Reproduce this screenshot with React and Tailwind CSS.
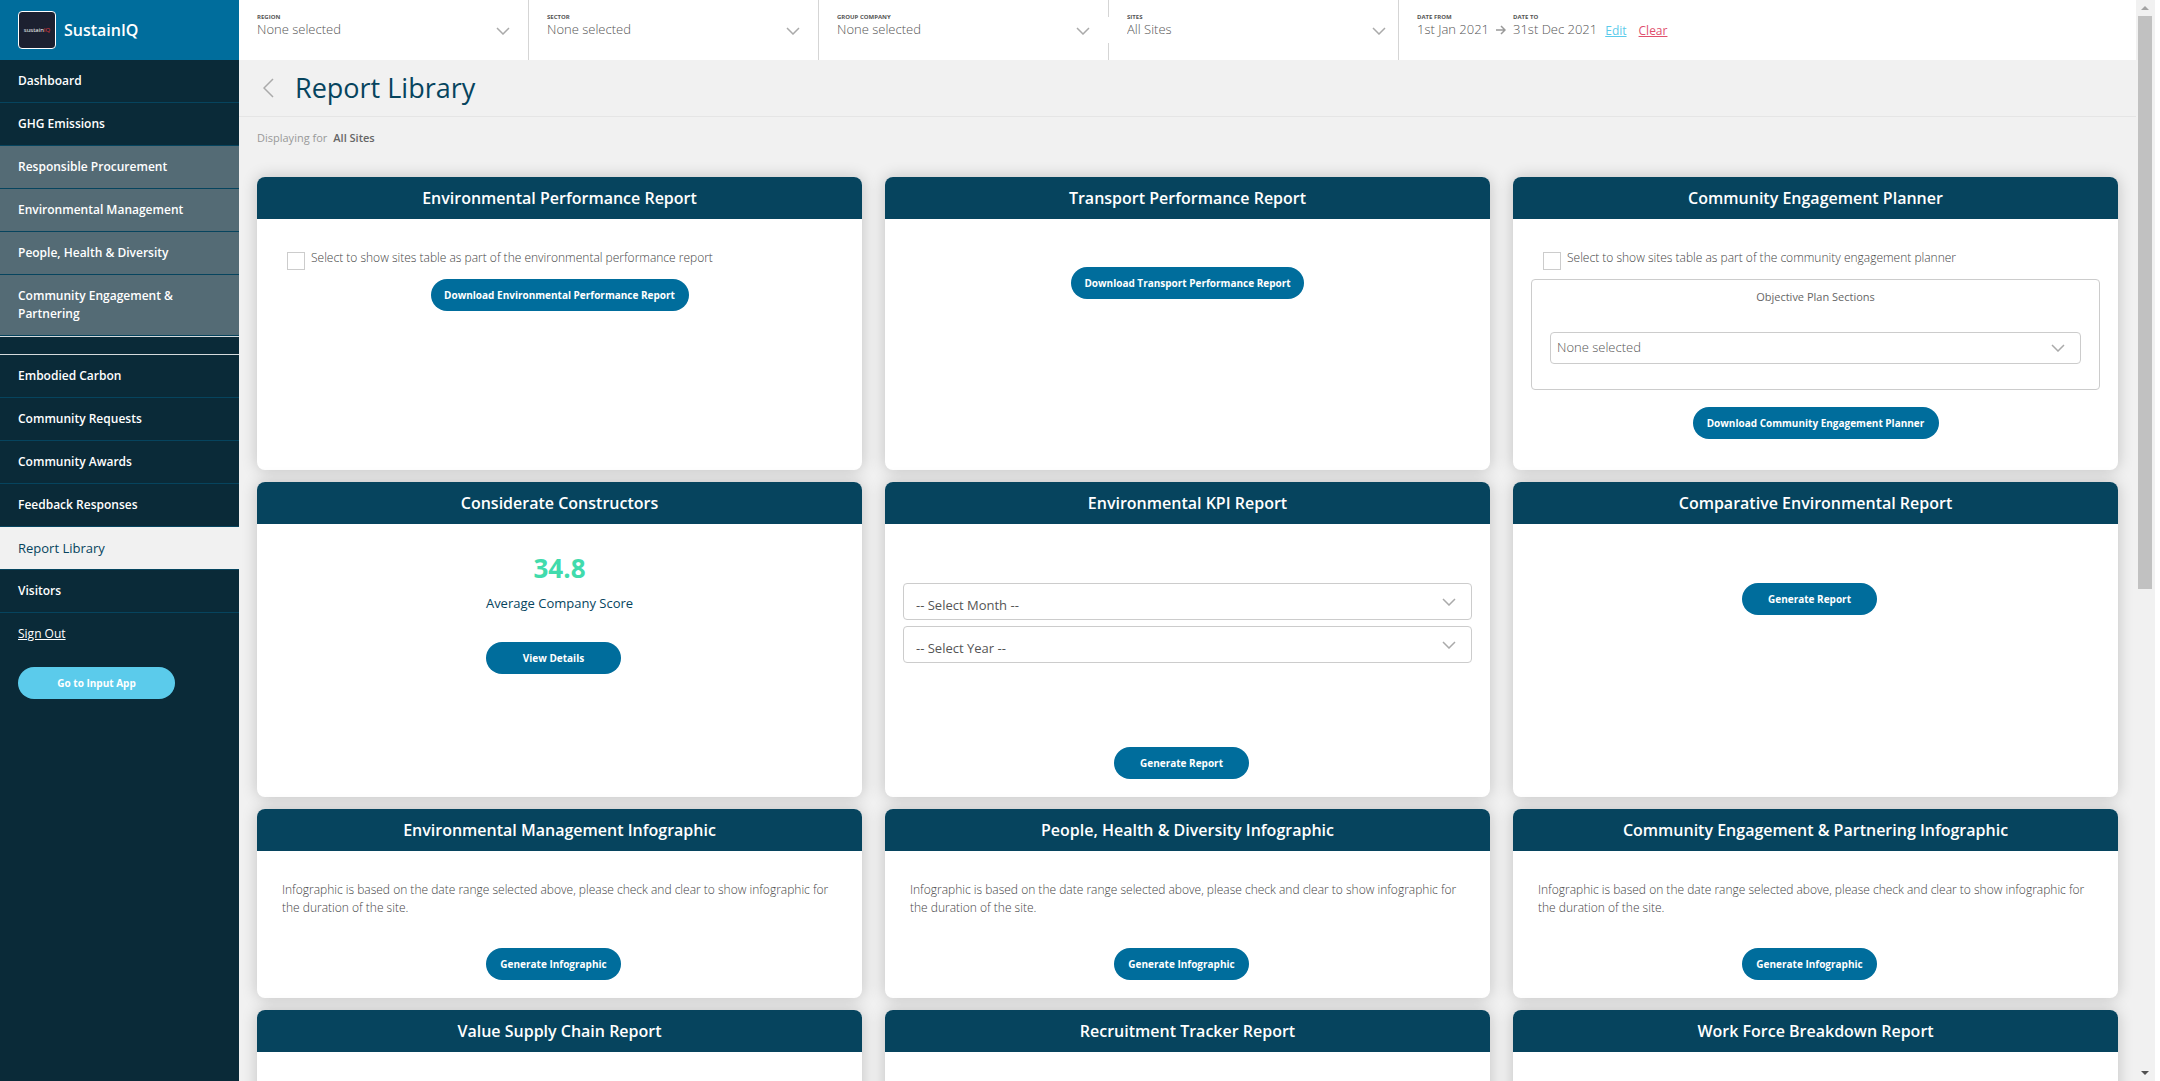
const navItems = [
  { label: "Dashboard" },
  { label: "GHG Emissions" },
  { label: "Responsible Procurement", muted: true },
  { label: "Environmental Management", muted: true },
  { label: "People, Health & Diversity", muted: true },
  { label: "Community Engagement & Partnering", muted: true },
];

const moreItems = [
  { label: "Embodied Carbon" },
  { label: "Community Requests" },
  { label: "Community Awards" },
  { label: "Feedback Responses" },
  { label: "Report Library", active: true },
  { label: "Visitors" },
];

const filters = [
  { id: "region", label: "Region", value: "None selected" },
  { id: "sector", label: "Sector", value: "None selected" },
  { id: "group", label: "Group company", value: "None selected" },
  { id: "sites", label: "Sites", value: "All Sites" },
];

function Chevron({ className }) {
  return (
    <svg viewBox="0 0 14 8" className={`pointer-events-none h-2 w-3.5 ${className}`} fill="none" stroke="#aaaaaa" strokeWidth="1.5">
      <path d="M1 1l6 6 6-6" />
    </svg>
  );
}

function NavLink({ item }) {
  let look = "bg-[#0a2a38] text-xs font-semibold text-white";
  if (item.muted) look = "bg-[#546b75] text-xs font-semibold text-white";
  if (item.active) look = "bg-[#f1f1f1] text-[13px] text-[#06445e]";
  return (
    <li className="border-t border-[#06445e] first:border-t-0">
      <a href="#" className={`block py-3 pr-8 pl-[18px] leading-[18px]! ${look}`}>
        {item.label}
      </a>
    </li>
  );
}

function Sidebar() {
  return (
    <aside className="w-[239px] shrink-0 bg-[#0a2a38]">
      <div className="flex h-[60px] items-center gap-2 bg-[#006d9c] pl-[18px]">
        <div className="flex size-[38px] items-center justify-center rounded border border-white bg-[#1c2030] text-[6px] text-white">
          <span>sustain</span>
          <span className="text-[#e0393e]">IQ</span>
        </div>
        <span className="text-base font-semibold text-white">SustainIQ</span>
      </div>
      <nav>
        <ul>
          {navItems.map((item) => (
            <NavLink key={item.label} item={item} />
          ))}
        </ul>
        <div className="border-t border-[#06445e]">
          <div className="h-[19px] border-y border-[#d5dadc]" />
        </div>
        <ul>
          {moreItems.map((item) => (
            <NavLink key={item.label} item={item} />
          ))}
          <li className="border-t border-[#06445e]">
            <a href="#" className="block py-3 pl-[18px] text-xs leading-[18px] text-white underline">
              Sign Out
            </a>
          </li>
        </ul>
      </nav>
      <button className="mt-3 ml-[18px] h-8 w-[157px] rounded-full bg-[#5bcbeb] text-[10px] font-bold text-white">
        Go to Input App
      </button>
    </aside>
  );
}

function FilterBar() {
  return (
    <div className="flex h-[60px] bg-white text-[#555555]">
      {filters.map((filter) => (
        <div key={filter.id} className="relative w-[290px] border-r border-[#d5d5d5] pt-[13px] pl-[18px]">
          {/* the group company field covers part of its own divider */}
          {filter.id === "group" && <span className="absolute top-[17px] -right-px h-[26px] w-1 bg-white" />}
          <label htmlFor={filter.id} className="block text-[6px] leading-[8px] font-bold uppercase">
            {filter.label}
          </label>
          <select id={filter.id} className="block h-4 w-full appearance-none text-[13px] leading-4 font-light">
            <option>{filter.value}</option>
          </select>
          <Chevron className={`absolute top-[27px] ${filter.id === "sites" ? "right-3" : "right-[18px]"}`} />
        </div>
      ))}
      <div className="flex pt-[13px] pl-[18px]">
        <div>
          <div className="text-[6px] leading-[8px] font-bold uppercase">Date from</div>
          <div className="text-[13px] leading-4 font-light">1st Jan 2021</div>
        </div>
        <svg viewBox="0 0 10 10" className="mx-[7px] mt-3 size-2.5" fill="none" stroke="#999999" strokeWidth="1.5">
          <path d="M0 5h9M5 1l4 4-4 4" />
        </svg>
        <div>
          <div className="text-[6px] leading-[8px] font-bold uppercase">Date to</div>
          <div className="text-[13px] leading-4 font-light">31st Dec 2021</div>
        </div>
        <div className="flex gap-3 pt-[10px] pl-2 text-xs">
          <a href="#" className="text-[#5bcbeb] underline">Edit</a>
          <a href="#" className="text-[#e0506e] underline">Clear</a>
        </div>
      </div>
    </div>
  );
}

function Card({ title, className, children }) {
  return (
    <section className={`flex flex-col rounded-lg bg-white shadow-[0_0_16px_rgba(0,0,0,0.2)] ${className}`}>
      <h2 className="rounded-t-lg bg-[#06445e] text-center text-base leading-[42px] font-semibold text-white">{title}</h2>
      {children}
    </section>
  );
}

function PillButton({ className, children }) {
  return (
    <button className={`h-8 self-center rounded-full bg-[#006d9c] text-[10px] font-bold text-white ${className}`}>
      {children}
    </button>
  );
}

function SitesCheckbox({ id, children }) {
  return (
    <div className="flex pt-[33px] pl-[30px]">
      <input id={id} type="checkbox" className="size-[18px] appearance-none border border-[#cccccc] bg-white" />
      <label htmlFor={id} className="pl-1.5 text-xs leading-3 font-light text-[#444444]">
        {children}
      </label>
    </div>
  );
}

function DropDown({ label, className, children }) {
  return (
    <div className="relative">
      <select aria-label={label} className={`block w-full appearance-none rounded border border-[#cccccc] bg-white text-[#555555] ${className}`}>
        <option>{children}</option>
      </select>
      <Chevron className="absolute top-1/2 right-4 -mt-1" />
    </div>
  );
}

function InfographicCard({ title }) {
  return (
    <Card title={title} className="min-h-[189px]">
      <p className="px-[25px] pt-[30px] text-xs leading-[18px] font-light text-[#444444]">
        Infographic is based on the date range selected above, please check and clear to show infographic for the duration of the site.
      </p>
      <PillButton className="mt-[31px] mr-3 w-[135px]">Generate Infographic</PillButton>
    </Card>
  );
}

function Scrollbar() {
  return (
    <div className="flex w-6 shrink-0 border-r-[5px] border-white bg-[#f1f1f1]">
      <div className="flex w-[18px] flex-col items-center justify-between px-0.5">
        <svg viewBox="0 0 8 4" className="my-1.5 h-1 w-2" fill="#a3a3a3">
          <path d="M0 4l4-4 4 4z" />
        </svg>
        <div className="mb-auto h-[53%] w-full bg-[#c1c1c1]" />
        <svg viewBox="0 0 8 4" className="my-1.5 h-1 w-2" fill="#505050">
          <path d="M0 0l4 4 4-4z" />
        </svg>
      </div>
    </div>
  );
}

export default function App() {
  return (
    <div className="flex h-screen overflow-hidden bg-[#f1f1f1] font-['Open_Sans',sans-serif]">
      <Sidebar />
      <main className="min-w-0 flex-1 overflow-hidden">
        <FilterBar />
        <header className="flex h-[57px] items-center gap-[21px] border-b border-[#e5e5e5] pl-6">
          <a href="#" aria-label="Back">
            <svg viewBox="0 0 11 20" className="h-5 w-[11px]" fill="none" stroke="#aaaaaa" strokeWidth="1.5">
              <path d="M10 1L1 10l9 9" />
            </svg>
          </a>
          <h1 className="text-[27px] text-[#06445e]">Report Library</h1>
        </header>
        <p className="flex gap-1.5 pt-3 pl-[18px] text-[11px] leading-[18px] text-[#999999]">
          Displaying for <span className="font-semibold text-[#666666]">All Sites</span>
        </p>

        <div className="grid grid-cols-3 gap-x-[23px] gap-y-3 px-[18px] pt-[30px]">
          <Card title="Environmental Performance Report" className="min-h-[293px]">
            <SitesCheckbox id="env-sites">Select to show sites table as part of the environmental performance report</SitesCheckbox>
            <PillButton className="mt-[9px] w-[258px]">Download Environmental Performance Report</PillButton>
          </Card>
          <Card title="Transport Performance Report" className="min-h-[293px]">
            <PillButton className="mt-12 w-[233px]">Download Transport Performance Report</PillButton>
          </Card>
          <Card title="Community Engagement Planner" className="min-h-[293px]">
            <SitesCheckbox id="community-sites">Select to show sites table as part of the community engagement planner</SitesCheckbox>
            <div className="mx-[18px] mt-[9px] rounded border border-[#cccccc] px-[18px] pt-2 pb-[25px]">
              <div className="pb-[26px] text-center text-[11px] leading-[18px] text-[#666666]">Objective Plan Sections</div>
              <DropDown label="Objective Plan Sections" className="h-8 px-1.5 text-[13px] font-light">None selected</DropDown>
            </div>
            <PillButton className="mt-[17px] w-[246px]">Download Community Engagement Planner</PillButton>
          </Card>

          <Card title="Considerate Constructors" className="min-h-[315px]">
            <div className="pt-[26px] text-center text-[26px] leading-9 font-bold text-[#41dbac]">34.8</div>
            <div className="pt-2 text-center text-[13px] leading-[18px] text-[#06445e]">Average Company Score</div>
            <PillButton className="mt-[30px] mr-3 w-[135px]">View Details</PillButton>
          </Card>
          <Card title="Environmental KPI Report" className="min-h-[315px]">
            <div className="flex flex-col gap-1.5 px-[18px] pt-[59px]">
              <DropDown label="Month" className="h-[37px] px-3 pt-2 text-[13px]">-- Select Month --</DropDown>
              <DropDown label="Year" className="h-[37px] px-3 pt-2 text-[13px]">-- Select Year --</DropDown>
            </div>
            <PillButton className="mt-auto mr-3 mb-[18px] w-[135px]">Generate Report</PillButton>
          </Card>
          <Card title="Comparative Environmental Report" className="min-h-[315px]">
            <PillButton className="mt-[59px] mr-3 w-[135px]">Generate Report</PillButton>
          </Card>

          <InfographicCard title="Environmental Management Infographic" />
          <InfographicCard title="People, Health & Diversity Infographic" />
          <InfographicCard title="Community Engagement & Partnering Infographic" />

          <Card title="Value Supply Chain Report" className="min-h-[189px]" />
          <Card title="Recruitment Tracker Report" className="min-h-[189px]" />
          <Card title="Work Force Breakdown Report" className="min-h-[189px]" />
        </div>
      </main>
      <Scrollbar />
    </div>
  );
}
